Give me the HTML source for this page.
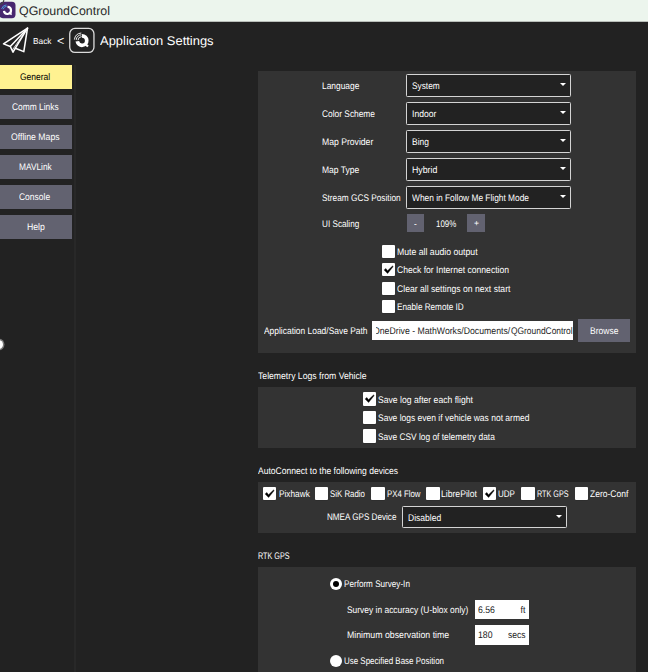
<!DOCTYPE html>
<html><head><meta charset="utf-8"><title>QGroundControl</title>
<style>
html,body{margin:0;padding:0;background:#222;}
body{width:648px;height:672px;position:relative;overflow:hidden;font-family:"Liberation Sans",sans-serif;}
.b{position:absolute;}
.t{position:absolute;white-space:pre;line-height:20px;font-family:"Liberation Sans", sans-serif;text-rendering:geometricPrecision;}
.arr{position:absolute;width:0;height:0;border-left:3.2px solid transparent;border-right:3.2px solid transparent;border-top:3.6px solid #fff;}
.clip{position:absolute;overflow:hidden;}
</style></head><body>
<div class="b " style="left:0px;top:0px;width:648px;height:20.6px;background:#ecf5ed;border-bottom:1px solid #b9beb9"></div>
<div class="b " style="left:0.3px;top:64.9px;width:71.3px;height:23.9px;background:#fff291;"></div>
<div class="b " style="left:0.3px;top:94.9px;width:71.3px;height:23.9px;background:#626270;"></div>
<div class="b " style="left:0.3px;top:124.9px;width:71.3px;height:23.9px;background:#626270;"></div>
<div class="b " style="left:0.3px;top:154.9px;width:71.3px;height:23.9px;background:#626270;"></div>
<div class="b " style="left:0.3px;top:184.9px;width:71.3px;height:23.9px;background:#626270;"></div>
<div class="b " style="left:0.3px;top:214.9px;width:71.3px;height:23.9px;background:#626270;"></div>
<div class="b " style="left:73.9px;top:64.8px;width:1.8px;height:608px;background:#282828;"></div>
<div class="b " style="left:258px;top:70.6px;width:377.8px;height:282.8px;background:#333;"></div>
<div class="b " style="left:258px;top:386.8px;width:377.8px;height:61px;background:#333;"></div>
<div class="b " style="left:258px;top:481.8px;width:377.8px;height:51.7px;background:#333;"></div>
<div class="b " style="left:258px;top:567px;width:377.8px;height:106px;background:#333;"></div>
<div class="b " style="left:405.9px;top:73.8px;width:165.1px;height:23px;background:#222;border:1.2px solid #d4d4d4;border-radius:1.3px;box-sizing:border-box"></div>
<div class="arr" style="left:559.8px;top:83.2px"></div>
<div class="b " style="left:405.9px;top:101.8px;width:165.1px;height:23px;background:#222;border:1.2px solid #d4d4d4;border-radius:1.3px;box-sizing:border-box"></div>
<div class="arr" style="left:559.8px;top:111.2px"></div>
<div class="b " style="left:405.9px;top:129.8px;width:165.1px;height:23px;background:#222;border:1.2px solid #d4d4d4;border-radius:1.3px;box-sizing:border-box"></div>
<div class="arr" style="left:559.8px;top:139.2px"></div>
<div class="b " style="left:405.9px;top:157.8px;width:165.1px;height:23px;background:#222;border:1.2px solid #d4d4d4;border-radius:1.3px;box-sizing:border-box"></div>
<div class="arr" style="left:559.8px;top:167.2px"></div>
<div class="b " style="left:405.9px;top:185.8px;width:165.1px;height:23px;background:#222;border:1.2px solid #d4d4d4;border-radius:1.3px;box-sizing:border-box"></div>
<div class="arr" style="left:559.8px;top:195.2px"></div>
<div class="b " style="left:402.2px;top:505.7px;width:164.8px;height:22.8px;background:#222;border:1.2px solid #d4d4d4;border-radius:1.3px;box-sizing:border-box"></div>
<div class="arr" style="left:555.6px;top:515.1px"></div>
<div class="b " style="left:406.5px;top:214.4px;width:17.5px;height:17.6px;background:#626270;"></div>
<div class="b " style="left:467.4px;top:214.4px;width:17.9px;height:17.6px;background:#626270;"></div>
<div class="b " style="left:381.8px;top:244.5px;width:13.15px;height:13.15px;background:#fff;border-radius:1px;box-shadow:0 0.6px 0 #2a2a2a"></div>
<div class="b " style="left:381.8px;top:263.0px;width:13.15px;height:13.15px;background:#fff;border-radius:1px;box-shadow:0 0.6px 0 #2a2a2a"></div>
<svg class="b" style="left:381.8px;top:263.0px" width="13.4" height="13.4" viewBox="0 0 13.4 13.4"><path d="M2.1 6.9 L3.9 5.5 L5.5 7.8 L10.5 3.0 L11.2 3.6 L5.6 10.5 Z" fill="#000" stroke="#000" stroke-width="0.4" stroke-linejoin="round"/></svg>
<div class="b " style="left:381.8px;top:281.5px;width:13.15px;height:13.15px;background:#fff;border-radius:1px;box-shadow:0 0.6px 0 #2a2a2a"></div>
<div class="b " style="left:381.8px;top:300.0px;width:13.15px;height:13.15px;background:#fff;border-radius:1px;box-shadow:0 0.6px 0 #2a2a2a"></div>
<div class="b " style="left:363.1px;top:392.4px;width:13.15px;height:13.15px;background:#fff;border-radius:1px;box-shadow:0 0.6px 0 #2a2a2a"></div>
<svg class="b" style="left:363.1px;top:392.4px" width="13.4" height="13.4" viewBox="0 0 13.4 13.4"><path d="M2.1 6.9 L3.9 5.5 L5.5 7.8 L10.5 3.0 L11.2 3.6 L5.6 10.5 Z" fill="#000" stroke="#000" stroke-width="0.4" stroke-linejoin="round"/></svg>
<div class="b " style="left:363.1px;top:410.9px;width:13.15px;height:13.15px;background:#fff;border-radius:1px;box-shadow:0 0.6px 0 #2a2a2a"></div>
<div class="b " style="left:363.1px;top:429.4px;width:13.15px;height:13.15px;background:#fff;border-radius:1px;box-shadow:0 0.6px 0 #2a2a2a"></div>
<div class="b " style="left:262.9px;top:486.6px;width:13.15px;height:13.15px;background:#fff;border-radius:1px;box-shadow:0 0.6px 0 #2a2a2a"></div>
<svg class="b" style="left:262.9px;top:486.6px" width="13.4" height="13.4" viewBox="0 0 13.4 13.4"><path d="M2.1 6.9 L3.9 5.5 L5.5 7.8 L10.5 3.0 L11.2 3.6 L5.6 10.5 Z" fill="#000" stroke="#000" stroke-width="0.4" stroke-linejoin="round"/></svg>
<div class="b " style="left:315.1px;top:486.6px;width:13.15px;height:13.15px;background:#fff;border-radius:1px;box-shadow:0 0.6px 0 #2a2a2a"></div>
<div class="b " style="left:371.4px;top:486.6px;width:13.15px;height:13.15px;background:#fff;border-radius:1px;box-shadow:0 0.6px 0 #2a2a2a"></div>
<div class="b " style="left:426.4px;top:486.6px;width:13.15px;height:13.15px;background:#fff;border-radius:1px;box-shadow:0 0.6px 0 #2a2a2a"></div>
<div class="b " style="left:483px;top:486.6px;width:13.15px;height:13.15px;background:#fff;border-radius:1px;box-shadow:0 0.6px 0 #2a2a2a"></div>
<svg class="b" style="left:483px;top:486.6px" width="13.4" height="13.4" viewBox="0 0 13.4 13.4"><path d="M2.1 6.9 L3.9 5.5 L5.5 7.8 L10.5 3.0 L11.2 3.6 L5.6 10.5 Z" fill="#000" stroke="#000" stroke-width="0.4" stroke-linejoin="round"/></svg>
<div class="b " style="left:521.4px;top:486.6px;width:13.15px;height:13.15px;background:#fff;border-radius:1px;box-shadow:0 0.6px 0 #2a2a2a"></div>
<div class="b " style="left:575.2px;top:486.6px;width:13.15px;height:13.15px;background:#fff;border-radius:1px;box-shadow:0 0.6px 0 #2a2a2a"></div>
<div class="b " style="left:372.4px;top:320.7px;width:200.8px;height:19.8px;background:#fff;"></div>
<div class="b " style="left:578.3px;top:318.7px;width:51.9px;height:23.8px;background:#626270;"></div>
<div class="b " style="left:474.8px;top:599.7px;width:54.4px;height:19.3px;background:#fff;"></div>
<div class="b " style="left:474.8px;top:625.3px;width:54.4px;height:19.3px;background:#fff;"></div>
<div class="b" style="left:329.9px;top:577.5px;width:12.6px;height:12.6px;border-radius:50%;background:#fff"></div>
<div class="b" style="left:333.1px;top:580.7px;width:6.2px;height:6.2px;border-radius:50%;background:#000"></div>
<div class="b" style="left:329.9px;top:654.8px;width:12.6px;height:12.6px;border-radius:50%;background:#fff"></div>
<div class="b" style="left:-5.8px;top:340.0px;width:8.8px;height:8.8px;border-radius:50%;background:#fff;box-shadow:0 0 0 1.5px #777"></div>
<!-- title icon -->
<svg class="b" style="left:0;top:0" width="22" height="22" viewBox="0 0 22 22">
<rect x="-0.7" y="1.8" width="16.2" height="16.4" rx="3.6" fill="#47276f"/>
<path d="M7.5 6.9 A3.55 3.55 0 1 1 3.95 10.9" fill="none" stroke="#fff" stroke-width="2.2"/>
<path d="M9.3 12.6 L11.6 14.6" stroke="#fff" stroke-width="1.6"/>
<g fill="none" stroke="#4a98d8" stroke-width="1">
<path d="M1.6 8.9 A5.6 5.6 0 0 1 6.4 4.9"/>
<path d="M3.1 9.3 A4.2 4.2 0 0 1 6.7 6.2"/>
</g>
<path d="M-1 4.5 Q3.5 4.3 3.9 -0.5" stroke="#444" stroke-width="1.1" fill="none"/>
</svg>
<!-- paper plane -->
<svg class="b" style="left:0;top:22px" width="34" height="36" viewBox="0 0 34 36">
<g fill="none" stroke="#fff" stroke-width="1.55" stroke-linejoin="round" stroke-linecap="round">
<path d="M27.5 6.2 L3.5 21.9 L10.3 24.5 L13.0 30.2 L15.4 26.2 L23.8 29.6 Z"/>
<path d="M27.5 6.2 L10.3 24.5"/>
<path d="M27.5 6.2 L15.4 26.2"/>
<path d="M27.5 6.2 L12.6 27.6" stroke-width="0.8"/>
</g></svg>
<!-- Q logo boxed -->
<svg class="b" style="left:66px;top:24px" width="32" height="32" viewBox="0 0 32 32">
<rect x="3.75" y="4.45" width="24.2" height="24" rx="5.2" fill="none" stroke="#dcdcdc" stroke-width="1.3"/>
<path d="M16 11.8 A4.75 4.75 0 1 1 11.3 17.3" fill="none" stroke="#fff" stroke-width="3.7"/>
<path d="M18.6 19.4 L22 22.5" stroke="#fff" stroke-width="2.2"/>
<g fill="none" stroke="#ececec" stroke-width="1">
<path d="M8.4 15.6 A7.6 7.6 0 0 1 15.3 9.0"/>
<path d="M10.2 15.9 A5.8 5.8 0 0 1 15.5 10.8"/>
<path d="M12.0 16.2 A4.0 4.0 0 0 1 15.7 12.6"/>
</g>
</svg>

<div class="clip" style="left:375.6px;top:320px;width:197.4px;height:21px"><span class="t" style="left:-2.4px;top:2px;font-size:9.6px;color:#1c1c1c;transform-origin:0 50%;transform:scaleX(0.907)">OneDrive - MathWorks/Documents/</span><span class="t" style="left:135px;top:2px;font-size:9.6px;color:#1c1c1c;transform-origin:0 50%;transform:scaleX(0.876)">QGroundControl</span></div>
<span class="t" style="left:19.20px;transform-origin:0 50%;top:1px;font-size:12.4px;color:#2a2a2a;transform:scaleX(1.0009)">QGroundControl</span>
<span class="t" style="left:33.30px;transform-origin:0 50%;top:31px;font-size:8.6px;color:#fff;transform:scaleX(0.9681)">Back</span>
<span class="t" style="left:56.90px;transform-origin:0 50%;top:31px;font-size:12.5px;color:#fff;transform:scaleX(0.9983)">&lt;</span>
<span class="t" style="left:99.80px;transform-origin:0 50%;top:31px;font-size:12.6px;color:#fff;transform:scaleX(1.0269)">Application Settings</span>
<span class="t" style="left:20.10px;transform-origin:0 50%;top:68px;font-size:9.6px;color:#000;transform:scaleX(0.8846)">General</span>
<span class="t" style="left:12.10px;transform-origin:0 50%;top:98px;font-size:9.6px;color:#fff;transform:scaleX(0.8741)">Comm Links</span>
<span class="t" style="left:10.70px;transform-origin:0 50%;top:128px;font-size:9.6px;color:#fff;transform:scaleX(0.9052)">Offline Maps</span>
<span class="t" style="left:19.10px;transform-origin:0 50%;top:158px;font-size:9.6px;color:#fff;transform:scaleX(0.8703)">MAVLink</span>
<span class="t" style="left:19.40px;transform-origin:0 50%;top:188px;font-size:9.6px;color:#fff;transform:scaleX(0.8834)">Console</span>
<span class="t" style="left:26.70px;transform-origin:0 50%;top:218px;font-size:9.6px;color:#fff;transform:scaleX(0.9070)">Help</span>
<span class="t" style="left:322.30px;transform-origin:0 50%;top:77px;font-size:9.6px;color:#fff;transform:scaleX(0.8738)">Language</span>
<span class="t" style="left:322.30px;transform-origin:0 50%;top:105px;font-size:9.6px;color:#fff;transform:scaleX(0.8718)">Color Scheme</span>
<span class="t" style="left:322.30px;transform-origin:0 50%;top:133px;font-size:9.6px;color:#fff;transform:scaleX(0.8990)">Map Provider</span>
<span class="t" style="left:322.30px;transform-origin:0 50%;top:161px;font-size:9.6px;color:#fff;transform:scaleX(0.8888)">Map Type</span>
<span class="t" style="left:322.30px;transform-origin:0 50%;top:189px;font-size:9.6px;color:#fff;transform:scaleX(0.8631)">Stream GCS Position</span>
<span class="t" style="left:322.30px;transform-origin:0 50%;top:215px;font-size:9.6px;color:#fff;transform:scaleX(0.8529)">UI Scaling</span>
<span class="t" style="left:412.20px;transform-origin:0 50%;top:77px;font-size:9.6px;color:#fff;transform:scaleX(0.8656)">System</span>
<span class="t" style="left:412.20px;transform-origin:0 50%;top:105px;font-size:9.6px;color:#fff;transform:scaleX(0.8933)">Indoor</span>
<span class="t" style="left:412.20px;transform-origin:0 50%;top:133px;font-size:9.6px;color:#fff;transform:scaleX(0.8801)">Bing</span>
<span class="t" style="left:412.20px;transform-origin:0 50%;top:161px;font-size:9.6px;color:#fff;transform:scaleX(0.9158)">Hybrid</span>
<span class="t" style="left:412.20px;transform-origin:0 50%;top:189px;font-size:9.6px;color:#fff;transform:scaleX(0.8707)">When in Follow Me Flight Mode</span>
<span class="t" style="left:414.00px;transform-origin:0 50%;top:215px;font-size:9.6px;color:#fff;transform:scaleX(0.8741)">-</span>
<span class="t" style="left:435.90px;transform-origin:0 50%;top:215px;font-size:9.6px;color:#fff;transform:scaleX(0.8270)">109%</span>
<span class="t" style="left:474.20px;transform-origin:0 50%;top:213px;font-size:8.6px;color:#fff;transform:scaleX(0.9938)">+</span>
<span class="t" style="left:397.30px;transform-origin:0 50%;top:243px;font-size:9.6px;color:#fff;transform:scaleX(0.9048)">Mute all audio output</span>
<span class="t" style="left:397.30px;transform-origin:0 50%;top:261px;font-size:9.6px;color:#fff;transform:scaleX(0.8937)">Check for Internet connection</span>
<span class="t" style="left:397.30px;transform-origin:0 50%;top:280px;font-size:9.6px;color:#fff;transform:scaleX(0.8972)">Clear all settings on next start</span>
<span class="t" style="left:397.30px;transform-origin:0 50%;top:298px;font-size:9.6px;color:#fff;transform:scaleX(0.8509)">Enable Remote ID</span>
<span class="t" style="left:263.50px;transform-origin:0 50%;top:322px;font-size:9.6px;color:#fff;transform:scaleX(0.8780)">Application Load/Save Path</span>
<span class="t" style="left:590.30px;transform-origin:0 50%;top:322px;font-size:9.6px;color:#fff;transform:scaleX(0.8875)">Browse</span>
<span class="t" style="left:257.90px;transform-origin:0 50%;top:367px;font-size:9.6px;color:#fff;transform:scaleX(0.9011)">Telemetry Logs from Vehicle</span>
<span class="t" style="left:378.40px;transform-origin:0 50%;top:391px;font-size:9.6px;color:#fff;transform:scaleX(0.8986)">Save log after each flight</span>
<span class="t" style="left:378.40px;transform-origin:0 50%;top:409px;font-size:9.6px;color:#fff;transform:scaleX(0.8844)">Save logs even if vehicle was not armed</span>
<span class="t" style="left:378.40px;transform-origin:0 50%;top:428px;font-size:9.6px;color:#fff;transform:scaleX(0.8726)">Save CSV log of telemetry data</span>
<span class="t" style="left:257.90px;transform-origin:0 50%;top:462px;font-size:9.6px;color:#fff;transform:scaleX(0.8905)">AutoConnect to the following devices</span>
<span class="t" style="left:278.50px;transform-origin:0 50%;top:485px;font-size:9.6px;color:#fff;transform:scaleX(0.8619)">Pixhawk</span>
<span class="t" style="left:330.40px;transform-origin:0 50%;top:485px;font-size:9.6px;color:#fff;transform:scaleX(0.8179)">SiK Radio</span>
<span class="t" style="left:386.90px;transform-origin:0 50%;top:485px;font-size:9.6px;color:#fff;transform:scaleX(0.8158)">PX4 Flow</span>
<span class="t" style="left:441.40px;transform-origin:0 50%;top:485px;font-size:9.6px;color:#fff;transform:scaleX(0.8975)">LibrePilot</span>
<span class="t" style="left:498.40px;transform-origin:0 50%;top:485px;font-size:9.6px;color:#fff;transform:scaleX(0.8339)">UDP</span>
<span class="t" style="left:536.90px;transform-origin:0 50%;top:485px;font-size:9.6px;color:#fff;transform:scaleX(0.7508)">RTK GPS</span>
<span class="t" style="left:590.10px;transform-origin:0 50%;top:485px;font-size:9.6px;color:#fff;transform:scaleX(0.8868)">Zero-Conf</span>
<span class="t" style="left:327.10px;transform-origin:0 50%;top:508px;font-size:9.6px;color:#fff;transform:scaleX(0.8452)">NMEA GPS Device</span>
<span class="t" style="left:407.90px;transform-origin:0 50%;top:509px;font-size:9.6px;color:#fff;transform:scaleX(0.8917)">Disabled</span>
<span class="t" style="left:257.90px;transform-origin:0 50%;top:547px;font-size:9.6px;color:#fff;transform:scaleX(0.7532)">RTK GPS</span>
<span class="t" style="left:344.20px;transform-origin:0 50%;top:575px;font-size:9.6px;color:#fff;transform:scaleX(0.8466)">Perform Survey-In</span>
<span class="t" style="left:347.40px;transform-origin:0 50%;top:601px;font-size:9.6px;color:#fff;transform:scaleX(0.8784)">Survey in accuracy (U-blox only)</span>
<span class="t" style="left:347.40px;transform-origin:0 50%;top:626px;font-size:9.6px;color:#fff;transform:scaleX(0.9128)">Minimum observation time</span>
<span class="t" style="left:344.20px;transform-origin:0 50%;top:652px;font-size:9.6px;color:#fff;transform:scaleX(0.8297)">Use Specified Base Position</span>
<span class="t" style="left:478.20px;transform-origin:0 50%;top:601px;font-size:9.6px;color:#1c1c1c;transform:scaleX(0.9050)">6.56</span>
<span class="t" style="right:122.20px;transform-origin:100% 50%;top:601px;font-size:9.6px;color:#1c1c1c;transform:scaleX(0.9050)">ft</span>
<span class="t" style="left:478.20px;transform-origin:0 50%;top:626px;font-size:9.6px;color:#1c1c1c;transform:scaleX(0.9050)">180</span>
<span class="t" style="left:508.20px;transform-origin:0 50%;top:626px;font-size:9.6px;color:#1c1c1c;transform:scaleX(0.8918)">secs</span>
</body></html>
